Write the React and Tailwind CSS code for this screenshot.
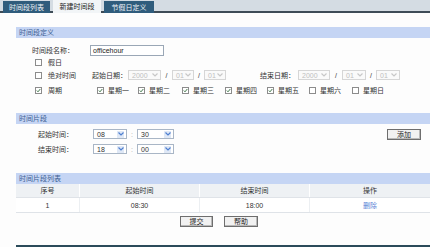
import React from "react";

const F = { fontFamily: '"Liberation Sans", "Noto Sans CJK SC", sans-serif' };

function Chevron({ color }) {
  return (
    <svg width="6" height="4" viewBox="0 0 6 4">
      <path d="M0.5 0.5 L3 3 L5.5 0.5" fill="none" stroke={color} strokeWidth="1.2" />
    </svg>
  );
}

function Sel({ v, w, disabled }) {
  return (
    <div
      className={`flex items-center justify-between h-[10px] pl-[3px] pr-[2px] border ${disabled ? "border-[#d6d6d6] text-[#c0c0c0] bg-[#fafafa]" : "border-[#a9b6c6] text-[#333] bg-white"}`}
      style={{ width: w }}
    >
      <span className="text-[7px] leading-none">{v}</span>
      <span className={`flex items-center justify-center w-[7px] h-[7px] ${disabled ? "" : "bg-[#dfe8f6]"}`}>
        <Chevron color={disabled ? "#c8c8c8" : "#4f7fd0"} />
      </span>
    </div>
  );
}

function Box({ checked }) {
  return (
    <span className="flex items-center justify-center w-[7px] h-[7px] border border-[#8c8c8c] bg-white shrink-0">
      {checked && (
        <svg width="5" height="5" viewBox="0 0 5 5">
          <path d="M0.8 2.5 L2 3.8 L4.3 1" fill="none" stroke="#2e6b3a" strokeWidth="0.9" />
        </svg>
      )}
    </span>
  );
}

function Header({ children }) {
  return (
    <div className="h-[11px] bg-[#c5d5f4] flex items-center pl-[3px] text-[7px] text-[#3d5f93] leading-none">
      {children}
    </div>
  );
}

function Btn({ children, w = 34 }) {
  return (
    <div
      className="h-[11px] flex items-center justify-center border border-[#6e6e6e] bg-[#f1f1f1] text-[7px] text-[#222] leading-none shadow-[inset_-1px_-1px_0_#b9b9b9]"
      style={{ width: w }}
    >
      {children}
    </div>
  );
}

export default function App() {
  const days = [
    ["星期一", true, "w-[41px]"],
    ["星期二", true, "w-[44px]"],
    ["星期三", true, "w-[43px]"],
    ["星期四", true, "w-[42px]"],
    ["星期五", true, "w-[42px]"],
    ["星期六", false, "w-[43px]"],
    ["星期日", false, "w-[43px]"],
  ];
  return (
    <div className="w-[430px] h-[247px] overflow-hidden bg-[#fdfdfd] text-[#333]" style={F}>
      {/* tab bar */}
      <div className="h-[13px] bg-[#d4dce3] border-b-2 border-[#3e4c57] flex items-end pl-[3px] gap-[3px]">
        <div className="w-[47px] h-[12px] -mb-[2px] bg-[#2f5c7c] text-[#eef3f7] text-[7px] flex items-center justify-center leading-none">
          时间段列表
        </div>
        <div className="w-[48px] h-[13px] -mb-[2px] bg-[#f2f5f7] text-[#222] text-[7px] flex items-center justify-center leading-none">
          新建时间段
        </div>
        <div className="w-[50px] h-[12px] -mb-[2px] bg-[#2f5c7c] text-[#eef3f7] text-[7px] flex items-center justify-center leading-none">
          节假日定义
        </div>
      </div>

      <div className="pl-[16px]">
        <div className="h-[14px]" />
        <Header>时间段定义</Header>

        {/* name row */}
        <div className="h-[14px] mt-[5px] flex items-center pl-[16px] text-[7px] leading-none">
          <span className="w-[58px]">时间段名称：</span>
          <div className="w-[74px] h-[11px] border border-[#9aa7b6] bg-white flex items-center pl-[2px] text-[7px] text-[#222]">
            officehour
          </div>
        </div>

        {/* holiday */}
        <div className="h-[10px] flex items-center pl-[19px] gap-[6px] text-[7px] leading-none">
          <Box />
          <span>假日</span>
        </div>

        {/* absolute time */}
        <div className="h-[16px] flex items-center pl-[19px] text-[7px] leading-none">
          <Box />
          <span className="ml-[6px] w-[44px]">绝对时间</span>
          <span className="w-[36px]">起始日期：</span>
          <Sel v="2000" w={33} disabled />
          <span className="w-[11px] text-center">/</span>
          <Sel v="01" w={22} disabled />
          <span className="w-[10px] text-center">/</span>
          <Sel v="01" w={22} disabled />
          <span className="ml-[34px] w-[38px]">结束日期：</span>
          <Sel v="2000" w={32} disabled />
          <span className="w-[12px] text-center">/</span>
          <Sel v="01" w={24} disabled />
          <span className="w-[10px] text-center">/</span>
          <Sel v="01" w={24} disabled />
        </div>

        {/* weekdays */}
        <div className="h-[14px] flex items-center pl-[19px] text-[7px] leading-none">
          <Box checked />
          <span className="ml-[6px] w-[49px]">周期</span>
          {days.map(([d, c, w]) => (
            <div key={d} className={`flex items-center gap-[4px] shrink-0 ${w}`}>
              <Box checked={c} />
              <span>{d}</span>
            </div>
          ))}
        </div>

        <div className="h-[16px]" />
        <Header>时间片段</Header>

        <div className="h-[3px]" />
        <div className="h-[14px] flex items-center pl-[22px] pr-[9px] text-[7px] leading-none">
          <span className="w-[55px]">起始时间：</span>
          <Sel v="08" w={34} />
          <span className="w-[10px] text-center text-[#aaa]">:</span>
          <Sel v="30" w={37} />
          <div className="flex-1" />
          <Btn>添加</Btn>
        </div>
        <div className="h-[14px] mt-[1px] flex items-center pl-[22px] text-[7px] leading-none">
          <span className="w-[55px]">结束时间：</span>
          <Sel v="18" w={34} />
          <span className="w-[10px] text-center text-[#aaa]">:</span>
          <Sel v="00" w={37} />
        </div>

        <div className="h-[17px]" />
        <Header>时间片段列表</Header>

        {/* table */}
        <div className="text-[7px] leading-none">
          <div className="h-[14px] grid grid-cols-[64px_120px_110px_1fr] bg-[#eef1f4] border-b border-[#dfe3e8]">
            <div className="flex items-center justify-center border-r border-white">序号</div>
            <div className="flex items-center justify-center border-r border-white">起始时间</div>
            <div className="flex items-center justify-center border-r border-white">结束时间</div>
            <div className="flex items-center justify-center">操作</div>
          </div>
          <div className="h-[15px] grid grid-cols-[64px_120px_110px_1fr] bg-white border-b border-[#dfe3e8]">
            <div className="flex items-center justify-center border-r border-[#eceff2]">1</div>
            <div className="flex items-center justify-center border-r border-[#eceff2]">08:30</div>
            <div className="flex items-center justify-center border-r border-[#eceff2]">18:00</div>
            <div className="flex items-center justify-center text-[#5a7fd6]">删除</div>
          </div>
        </div>

        <div className="flex items-center gap-[11px] pl-[164px] mt-[3px]">
          <Btn w={33}>提交</Btn>
          <Btn w={34}>帮助</Btn>
        </div>

        <div className="h-[18px]" />
        <div className="h-[3px] bg-[#2b4b5a]" />
      </div>
    </div>
  );
}
